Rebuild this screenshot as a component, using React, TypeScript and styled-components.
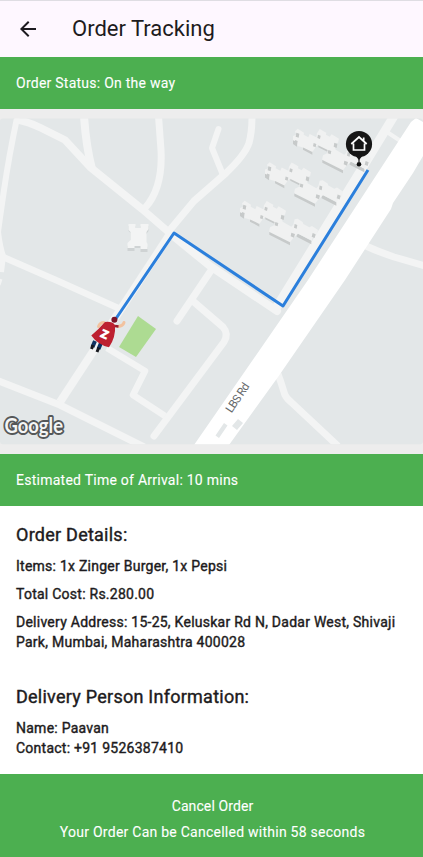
import React from "react";
import styled, { createGlobalStyle } from "styled-components";

const GlobalStyle = createGlobalStyle`
  * { box-sizing: border-box; }
  body { margin: 0; background: #fff; font-family: Roboto, sans-serif; color: #1d1b20; }
`;

const Screen = styled.main`
  display: flex;
  flex-direction: column;
  width: 423px;
  height: 857px;
  overflow: hidden;
  background: #fff;
`;

const AppBar = styled.header`
  display: flex;
  align-items: center;
  flex: none;
  gap: 32px;
  height: 57px;
  padding: 0 16px 1px;
  border-top: 1px solid #dfdde3;
  background: #fef7ff;
`;

const BackButton = styled.button`
  display: flex;
  padding: 0;
  border: 0;
  background: none;
  color: #1d1b20;
`;

const Title = styled.h1`
  margin: 0;
  font-size: 22px;
  line-height: 28px;
  font-weight: 400;
`;

const StatusBar = styled.div`
  flex: none;
  height: 52px;
  padding: 16px;
  background: #4caf50;
  color: #fff;
  font-size: 14px;
  line-height: 20px;
  letter-spacing: 0.25px;
  -webkit-text-stroke: 0.1px currentColor;
`;

const MapArea = styled.section`
  flex: none;
  height: 345px;
  background: #ededed;
  svg { display: block; }
`;

const Details = styled.section`
  flex: 1;
  padding: 16px 16px 0;
  -webkit-text-stroke: 0.4px currentColor;
`;

const Heading = styled.h2<{ $spaced?: boolean }>`
  margin: ${(p) => (p.$spaced ? "32px" : "0")} 0 8px;
  font-size: 18px;
  line-height: 26px;
  font-weight: 400;
  letter-spacing: 0.25px;
`;

const Line = styled.p<{ $gap?: boolean }>`
  margin: 0 0 ${(p) => (p.$gap ? "8px" : "0")};
  font-size: 14px;
  line-height: 20px;
  font-weight: 400;
  letter-spacing: 0.25px;
`;

const CancelPanel = styled.footer`
  display: flex;
  flex-direction: column;
  align-items: center;
  gap: 6px;
  flex: none;
  height: 83px;
  padding: 22px 0 0 2px;
  background: #4caf50;
  color: #fff;
  font-size: 14px;
  line-height: 20px;
  -webkit-text-stroke: 0.1px currentColor;
`;

const CancelButton = styled.button`
  padding: 0;
  border: 0;
  background: none;
  color: inherit;
  font: inherit;
  letter-spacing: 0.1px;
`;

const CancelNote = styled.span`
  letter-spacing: 0.25px;
`;

const blockOutline =
  "36,250 44,242 63,254 62,260 76,268 80,258 100,268 102,256 110,243 130,254 129,260 140,266 146,259 168,272 165,284 158,286 162,290 156,298 158,305 184,320 190,314 194,298 203,296 218,306 220,312 238,322 246,318 264,330 261,344 250,347 246,362 204,341 198,347 188,356 180,367 117,335 120,322 132,316 134,306 105,292 99,296 88,312 62,299 44,294 42,282 30,277 30,264 40,260";

const Buildings = ({ x, y }: { x: number; y: number }) => (
  <g transform={`translate(${x} ${y}) scale(.3333)`}>
    <path d="M60 292l28 16v12l-28-15zM30 274l12 4v18l-12-8zM106 286l30 15v12l-30-15zM118 332l62 32v12l-62-32zM200 338l44 24v11l-44-23z" fill="#c7caca" />
    <polygon points={blockOutline} fill="#f0f1f1" />
    <path d="M40 254l9 3-2 12-9-3zM36 276l8 3-2 11-7-4zM92 285l8 3-2 10-8-3zM105 260l8 3-2 10-8-3zM154 284l9 4-2 12-9-4zM136 306l9 3-2 10-9-3zM194 312l8 3-2 11-8-3zM184 338l11 4-3 11-10-4zM248 339l9 4-3 11-9-4z" fill="#c7caca" />
  </g>
);

const TrackingMap = () => (
  <svg width="423" height="345" viewBox="0 109 423 345" role="img" aria-label="Delivery route">
    <defs>
      <clipPath id="mapClip">
        <rect x="0" y="118.5" width="423" height="325.7" rx="3" />
      </clipPath>
    </defs>
    <g clipPath="url(#mapClip)">
      <rect x="0" y="118" width="423" height="327" fill="#e3e7e8" />
      <g fill="none" stroke="#f3f4f4" strokeWidth="7" strokeLinejoin="round">
        <path d="M17 118Q9 156 4 190T-2 232Q0 248 3 256L1 272" strokeWidth="6" />
        <path d="M15 119Q29 122 41 128L65 140L90 167L142 209L172 235" strokeWidth="7.5" />
        <path d="M172 235L210 266L277 311" strokeWidth="8" strokeLinecap="round" />
        <path d="M84 116Q86 146 92 169" strokeWidth="8" />
        <path d="M158.5 116L161 150Q163 188 145 208" />
        <path d="M169 231L194 201L226 173Q245 155 249 143Q252 132 252 117" />
        <path d="M218.500 129L212 148L223 175" strokeWidth="6" strokeLinecap="round" />
        <path d="M172 231L60 402" strokeWidth="8" />
        <path d="M3 257L58 281L118 308" strokeWidth="6.5" />
        <path d="M-4 380L60 405L144 447" />
        <path d="M107 348L145 371L133 395L165 416" strokeWidth="6.500" />
        <path d="M154 436L224 342Q229 334 223 327L194 302" strokeWidth="7" strokeLinecap="round" />
        <path d="M212 269L177 321" strokeWidth="7" strokeLinecap="round" />
        <path d="M394 116L366 162L276 308" strokeWidth="9" />
        <path d="M387 132L402 142" strokeWidth="4" />
        <path d="M366 246Q379 252 394 257L425 266" />
        <path d="M278 374Q281 382 284 392Q285 397 291 402L338 446" />
        <path d="M-1 285L1 279" strokeWidth="3" />
      </g>
      <path d="M416 118L423 122V156L413 173L411 176L393 203L391 209L345 280L278 377L229 445H194L212 419L308 280L411 122Z" fill="#fff" />
      <path d="M224 423l3.500 2.500-8.500 12.500-3.500-2.500ZM238 419l5 4-6 7-5-4Z" fill="#e3e7e8" />
      <Buildings x={283} y={48} />
      <Buildings x={255} y={81.5} />
      <Buildings x={230} y={120} />
      <path d="M128.500 224h7v4h5v-4h8v5l-3 4v10l2 2v5h-7v-4h-6v3h-7v-5l3-3v-10l-2-2z" fill="#cfd3d4" transform="translate(0 2)" />
      <path d="M128.500 224h7v4h5v-4h8v5l-2 3v10l1 2v5h-7v-3h-6v2h-7v-5l3-3v-8l-2-2z" fill="#f3f4f4" />
      <path d="M138 316L156 329L136 357L119 347Z" fill="#addb92" />
      <path d="M115 320L174 233L283 306L368 170" fill="none" stroke="#2b7fdc" strokeWidth="3" strokeLinejoin="round" />

      <g>
        <path d="M95 341l-2.500 6M101 343l-2.500 6" stroke="#0e3262" strokeWidth="4" />
        <path d="M93 345l-1.500 4M98.800 347.500l-1.800 4.500" stroke="#17191f" strokeWidth="3" />
        <path d="M104 322.500q-4 0-5.500 4M118 326.500q5-.5 6-4" fill="none" stroke="#f2c29f" strokeWidth="3" strokeLinecap="round" />
        <path d="M105 322Q112 321 115 325Q116 337 109 347.300Q98 345 91.300 335.500Q98 330 105 322Z" fill="#bd2030" />
        <circle cx="114.400" cy="319.800" r="3" fill="#7b1428" />
        <path d="M115 326l3.500.5" stroke="#9b1b2c" strokeWidth="2.400" />
        <text transform="translate(104.800 334) rotate(24)" x="0" y="4.500" textAnchor="middle" fontFamily="Roboto, sans-serif" fontSize="16.500" fontWeight="900" fill="#fff">z</text>
      </g>

      <path d="M359 153v9" stroke="#161616" strokeWidth="1.200" />
      <path d="M354 154h10l-5 6z" fill="#161616" />
      <circle cx="359" cy="144" r="13.100" fill="#161616" />
      <circle cx="359" cy="164.300" r="2.300" fill="#111" />
      <path d="M353.500 143.500v6.500h11v-6.500M351.300 144l7.700-7 7.700 7M363.700 137.500v3" fill="none" stroke="#fff" strokeWidth="1.700" />

      <text transform="translate(231.500 413.500) rotate(-56)" fontSize="11.500" fill="#66696b" fontFamily="Roboto, sans-serif" textLength="33">LBS Rd</text>
      <text x="4.500" y="433" fontSize="20" fontWeight="700" fontFamily="Lato, sans-serif" textLength="58.500" lengthAdjust="spacingAndGlyphs" fill="#f5f6f6" stroke="#555859" strokeWidth="3.800" strokeLinejoin="round" paintOrder="stroke">Google</text>
    </g>
  </svg>
);

export default function App() {
  return (
    <>
      <GlobalStyle />
      <Screen>
        <AppBar>
          <BackButton aria-label="Back">
            <svg width="24" height="24" viewBox="0 0 24 24" fill="currentColor">
              <path d="M20 11H7.830l5.590-5.590L12 4l-8 8 8 8 1.410-1.410L7.830 13H20v-2z" />
            </svg>
          </BackButton>
          <Title>Order Tracking</Title>
        </AppBar>
        <StatusBar>Order Status: On the way</StatusBar>
        <MapArea>
          <TrackingMap />
        </MapArea>
        <StatusBar>Estimated Time of Arrival: 10 mins</StatusBar>
        <Details>
          <Heading>Order Details:</Heading>
          <Line $gap>Items: 1x Zinger Burger, 1x Pepsi</Line>
          <Line $gap>Total Cost: Rs.280.00</Line>
          <Line>Delivery Address: 15-25, Keluskar Rd N, Dadar West, Shivaji Park, Mumbai, Maharashtra 400028</Line>
          <Heading $spaced>Delivery Person Information:</Heading>
          <Line>Name: Paavan</Line>
          <Line>Contact: +91 9526387410</Line>
        </Details>
        <CancelPanel>
          <CancelButton>Cancel Order</CancelButton>
          <CancelNote>Your Order Can be Cancelled within 58 seconds</CancelNote>
        </CancelPanel>
      </Screen>
    </>
  );
}
